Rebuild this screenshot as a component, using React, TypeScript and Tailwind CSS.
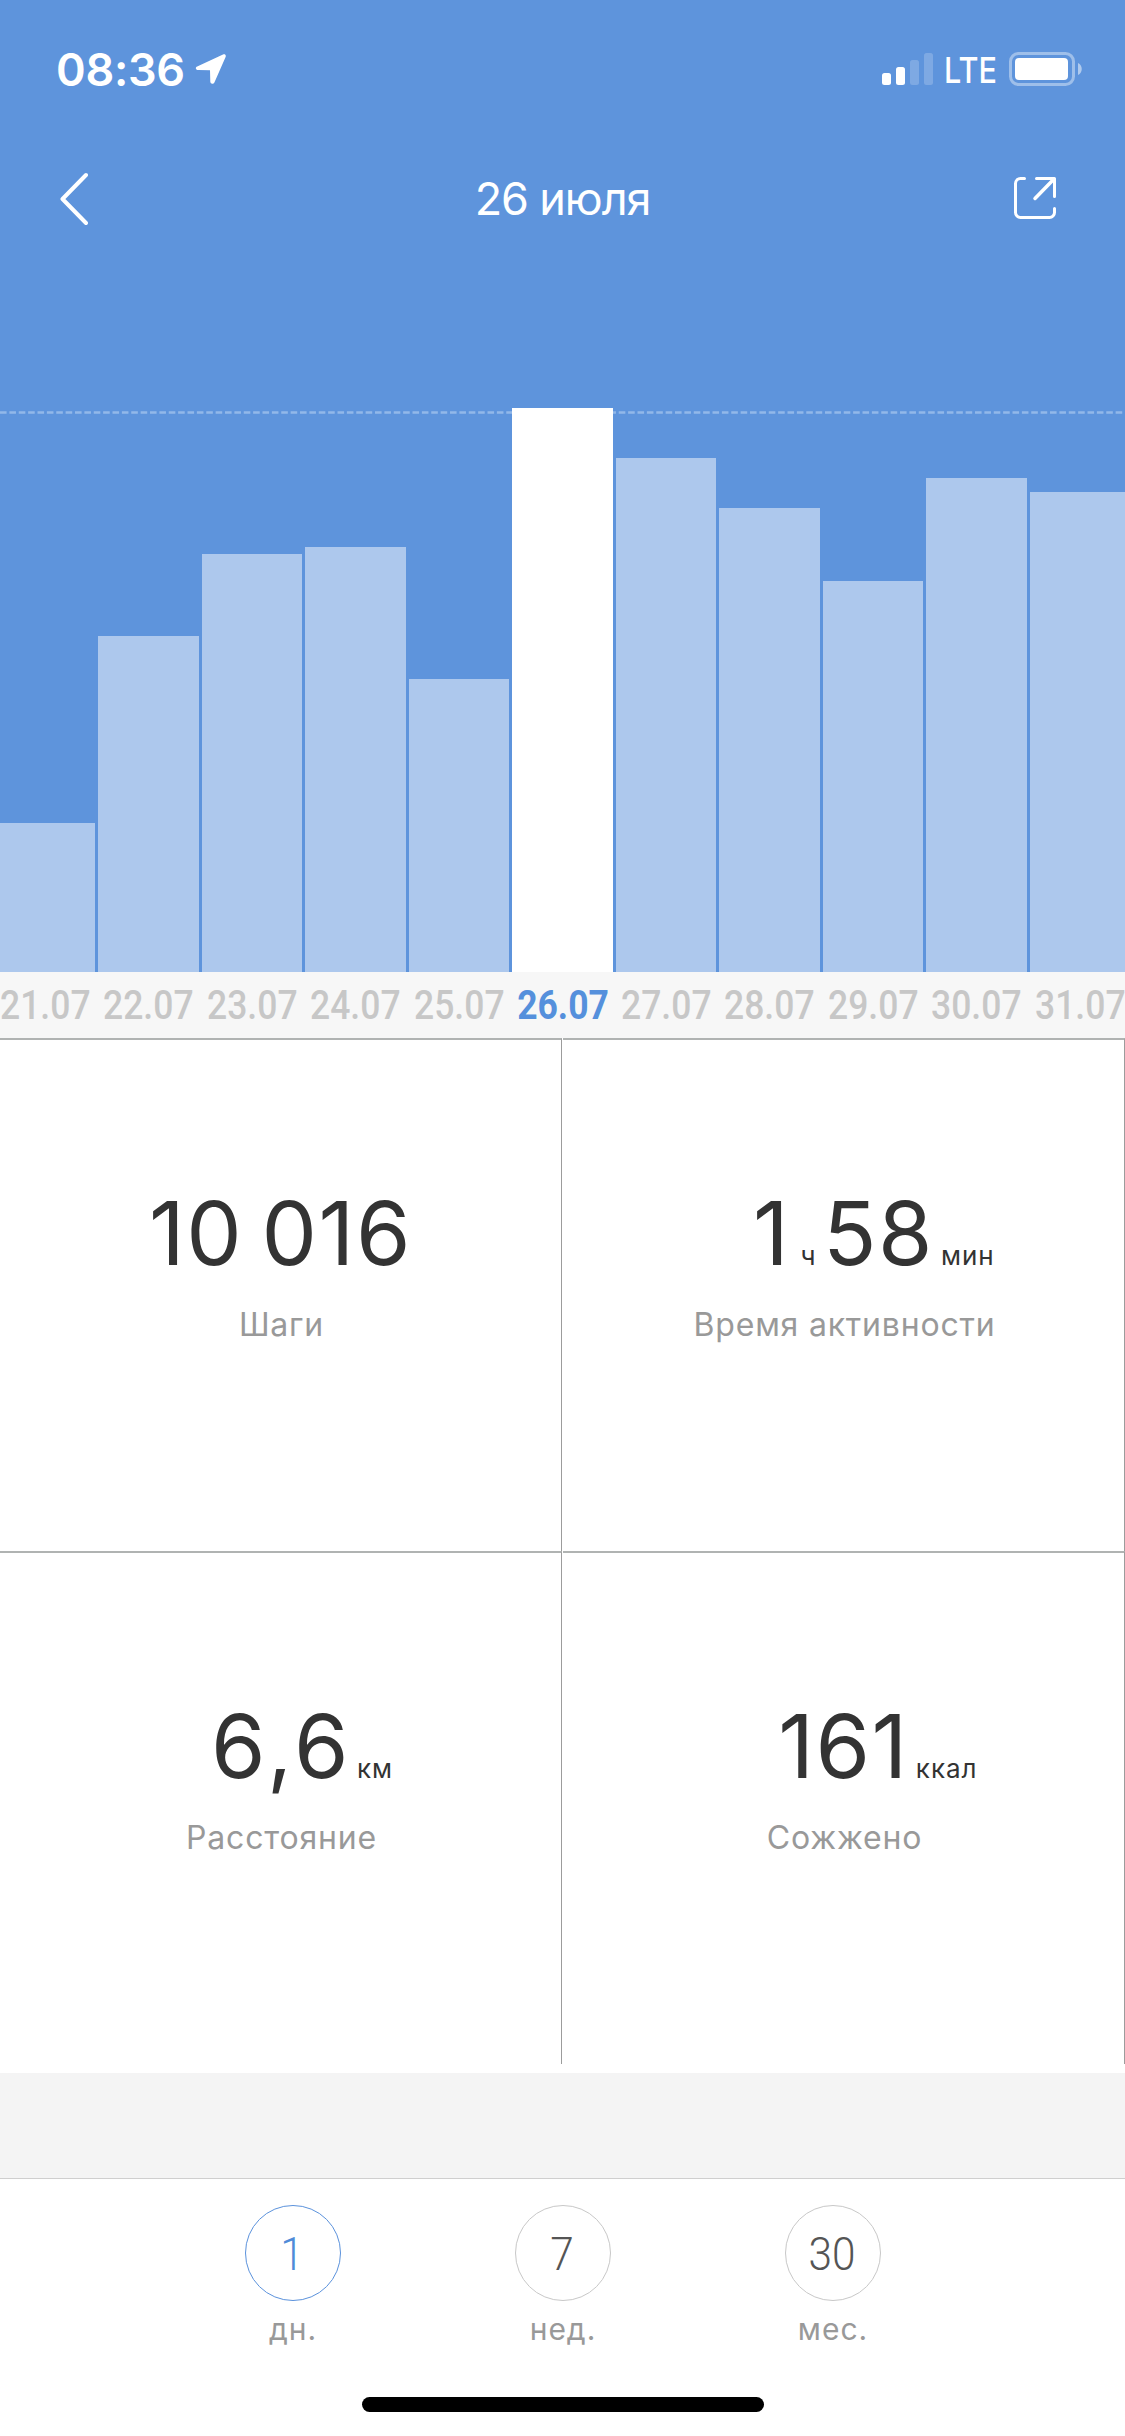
import { useState } from "react"

const days = [
  { date: "21.07", height: 149 },
  { date: "22.07", height: 336 },
  { date: "23.07", height: 418 },
  { date: "24.07", height: 425 },
  { date: "25.07", height: 293 },
  { date: "26.07", height: 564 },
  { date: "27.07", height: 514 },
  { date: "28.07", height: 464 },
  { date: "29.07", height: 391 },
  { date: "30.07", height: 494 },
  { date: "31.07", height: 480 },
];

const periods = [
  { value: "1", label: "дн." },
  { value: "7", label: "нед." },
  { value: "30", label: "мес." },
];

const StatusBar = () => (
  <div className="flex h-[138px] items-center justify-between pl-[56px] pr-[43px] text-white">
    <div className="flex items-center">
      <span className="text-[45px] leading-[45px] font-semibold tracking-[-0.3px]">08:36</span>
      <svg className="ml-[10px]" width="32" height="32" viewBox="0 0 32 32" fill="white">
        <path d="M2.2 13.4 28 1.6c1.900-.8 3.300.5 2.600 2.400L19.400 29.400c-.9 2-4 1.700-4.100-.6L15 17.200 3.500 17c-2.900-.1-3.600-2.500-1.300-3.600z" />
      </svg>
    </div>
    <div className="flex items-center">
      <div className="flex h-8 items-end gap-[5px]">
        <span className="h-3 w-[9px] rounded-[2.500px] bg-white" />
        <span className="h-[18px] w-[9px] rounded-[2.500px] bg-white" />
        <span className="h-[25px] w-[9px] rounded-[2.500px] bg-white/20" />
        <span className="h-8 w-[9px] rounded-[2.500px] bg-white/20" />
      </div>
      <span className="ml-[11px] mt-[2px] w-[54px] origin-left scale-x-[0.85] text-[36px] leading-9 font-medium">LTE</span>
      <svg className="ml-[11px]" width="73" height="34" viewBox="0 0 73 34" fill="none">
        <rect x="1.500" y="1.500" width="63" height="31" rx="8" stroke="white" strokeOpacity="0.4" strokeWidth="3" />
        <rect x="6" y="6" width="53" height="22" rx="4" fill="white" />
        <path d="M69 11c5 2 5 10 0 12z" fill="white" fillOpacity="0.5" />
      </svg>
    </div>
  </div>
);

const NavBar = () => (
  <div className="grid h-[120px] grid-cols-3 items-center pl-[60px] pr-[69px] text-white">
    <svg className="mt-[2px]" width="28" height="54" viewBox="0 0 28 54" fill="none" stroke="white" strokeWidth="4" strokeLinecap="round" strokeLinejoin="round">
      <path d="M26 3 2.500 27 26 51" />
    </svg>
    <h1 className="-mr-[9px] text-center text-[45px] leading-[45px] tracking-[-1.100px]">26 июля</h1>
    <svg className="justify-self-end" width="42" height="42" viewBox="0 0 42 42" fill="none" stroke="white" strokeWidth="3" strokeLinecap="round" strokeLinejoin="round">
      <path d="M10.500 1.500H6.500a5 5 0 0 0-5 5v29a5 5 0 0 0 5 5h29a5 5 0 0 0 5-5V31.500" />
      <path d="M22.500 1.500h18v18" />
      <path d="M21 21.500 39.500 2.500" strokeWidth="3.500" />
    </svg>
  </div>
);

const Stat = ({ label, unit, children }: any) => (
  <div className="flex h-[513px] flex-col items-center border-t-2 border-t-[#b0b3b2] border-r border-r-[#9c9c9c] pt-[149px]">
    <div className="flex items-baseline text-[88px] leading-[88px] tracking-[1.500px] text-[#333] [font-kerning:none]">
      {children}
      {/* the unit hangs to the right so that the number itself stays centered */}
      {unit && <span className="w-0 indent-[7px] text-[26px] leading-[26px] tracking-[1px] whitespace-nowrap">{unit}</span>}
    </div>
    <p className="mt-8 pl-[2px] text-[32px] leading-8 tracking-[0.800px] text-[#999]">{label}</p>
  </div>
);

const App = () => {
  const [selected, setSelected] = useState("26.07");
  const [period, setPeriod] = useState("1");

  return (
    <div className="flex h-[2436px] w-[1125px] flex-col overflow-hidden bg-white font-[Inter,'Liberation_Sans',sans-serif]">
      <header className="bg-[#5e94dc]">
        <StatusBar />
        <NavBar />
        <div className="relative h-[714px] overflow-hidden">
          {/* goal line */}
          <svg className="absolute top-[153px] left-0" width="1125" height="3">
            <line x1="0" y1="1.500" x2="1125" y2="1.500" stroke="#92b8e9" strokeWidth="2.500" strokeDasharray="6.600 2.775" />
          </svg>
          <div className="relative -mx-[5.250px] flex h-full items-end gap-[3px]">
            {days.map((day) => (
              <div
                key={day.date}
                onClick={() => setSelected(day.date)}
                className={`flex-1 ${day.date === selected ? "bg-white" : "bg-[#adc8ed]"}`}
                style={{ height: day.height }}
              />
            ))}
          </div>
        </div>
      </header>

      <div className="h-[66px] overflow-hidden bg-[#f7f7f7] pt-[12px]">
        <div className="-mx-[5.250px] flex gap-[3px] font-[Roboto,sans-serif] text-[41px] leading-[42px] font-medium">
          {days.map((day) => (
            <div key={day.date} className="flex w-0 flex-1 justify-center">
              <span className={`scale-x-[0.865] ${day.date === selected ? "font-bold text-[#5590dc]" : "text-[#c7c7c7]"}`}>
                {day.date}
              </span>
            </div>
          ))}
        </div>
      </div>

      <main className="grid grid-cols-[562px_562px] gap-x-px bg-white pb-[9px]">
        <Stat label="Шаги">
          <span className="[word-spacing:-8px]">10 016</span>
        </Stat>
        <Stat label="Время активности" unit="мин">
          <span>1</span>
          <span className="mr-[6px] ml-[10px] text-[26px] leading-[26px]">ч</span>
          <span>58</span>
        </Stat>
        <Stat label="Расстояние" unit="км">
          <span>6,6</span>
        </Stat>
        <Stat label="Сожжено" unit="ккал">
          <span>161</span>
        </Stat>
      </main>

      <div className="h-[105px] bg-[#f4f4f4]" />

      <footer className="flex flex-1 flex-col items-center border-t border-[#cfcfcf] bg-white pt-[26px]">
        <div className="flex gap-[174px]">
          {periods.map((item) => (
            <button key={item.value} onClick={() => setPeriod(item.value)} className="flex w-24 flex-col items-center">
              <span
                className={`flex size-24 items-center justify-center rounded-full border-[1.500px] font-[Roboto,sans-serif] text-[47px] leading-[47px] font-light ${
                  item.value === period ? "border-[#5b92dc] text-[#4f8bd8]" : "border-[#c8c8c8] text-[#555]"
                }`}
              >
                <span className="scale-x-[0.9]">{item.value}</span>
              </span>
              <span className="mt-[13px] pl-px text-[30px] leading-[30px] tracking-[1px] text-[#999]">{item.label}</span>
            </button>
          ))}
        </div>
        <div className="mt-[53px] h-[15px] w-[402px] rounded-full bg-black" />
      </footer>
    </div>
  );
};

export default App;
